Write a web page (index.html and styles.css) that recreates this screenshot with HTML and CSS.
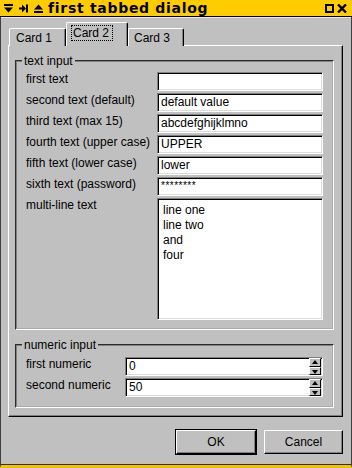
FILE: index.html
```html
<!DOCTYPE html>
<html>
<head>
<meta charset="utf-8">
<link rel="stylesheet" href="styles.css">
</head>
<body>
<div class="window">
  <div class="titlebar">
    <div class="tb-left">
      <svg class="tbi" width="9" height="9" viewBox="0 0 9 9"><rect x="0" y="0" width="9" height="2" fill="#000"/><polygon points="0,3.5 9,3.5 4.5,8.5" fill="#000"/></svg>
      <svg class="tbi" width="9" height="9" viewBox="0 0 9 9"><rect x="0" y="3.5" width="4" height="2" fill="#000"/><polygon points="3,0.5 7,4.5 3,8.5" fill="#000"/><rect x="7" y="0.5" width="2" height="8" fill="#000"/></svg>
      <svg class="tbi last" width="9" height="9" viewBox="0 0 9 9"><polygon points="0,5.5 9,5.5 4.5,0.5" fill="#000"/><rect x="0" y="7" width="9" height="2" fill="#000"/></svg>
      <span class="title">first tabbed dialog</span>
    </div>
    <div class="tb-right">
      <svg width="9" height="9" viewBox="0 0 9 9"><rect x="1" y="1" width="7" height="7" fill="none" stroke="#000" stroke-width="2"/></svg>
      <svg width="10" height="9" viewBox="0 0 10 9"><path d="M1 0.5 L9 8.5 M9 0.5 L1 8.5" stroke="#000" stroke-width="2.4"/></svg>
    </div>
  </div>
  <div class="body">
    <div class="tabs">
      <div class="tab t1">Card 1</div>
      <div class="tab t2 active"><span class="focus">Card 2</span></div>
      <div class="tab t3">Card 3</div>
    </div>
    <div class="panel">
      <fieldset class="group">
        <legend>text input</legend>
        <div class="grid text-grid">
          <div class="label">first text</div><div class="field"></div>
          <div class="label">second text (default)</div><div class="field">default value</div>
          <div class="label">third text (max 15)</div><div class="field">abcdefghijklmno</div>
          <div class="label">fourth text (upper case)</div><div class="field">UPPER</div>
          <div class="label">fifth text (lower case)</div><div class="field">lower</div>
          <div class="label">sixth text (password)</div><div class="field pw">********</div>
          <div class="label">multi-line text</div>
          <div class="field multi">line one<br>line two<br>and<br>four</div>
        </div>
      </fieldset>
      <fieldset class="group numeric">
        <legend>numeric input</legend>
        <div class="grid num-grid">
          <div class="label">first numeric</div>
          <div class="field spin"><span>0</span><span class="spinner"><span class="sb up"></span><span class="sb down"></span></span></div>
          <div class="label">second numeric</div>
          <div class="field spin"><span>50</span><span class="spinner"><span class="sb up"></span><span class="sb down"></span></span></div>
        </div>
      </fieldset>
    </div>
    <div class="footer">
      <div class="btn default"><div class="btn-in">OK</div></div>
      <div class="btn cancel"><div class="btn-in">Cancel</div></div>
    </div>
  </div>
</div>
</body>
</html>
```
FILE: styles.css
```css
html, body {
  margin: 0;
  padding: 0;
}
body {
  width: 352px;
  height: 468px;
  overflow: hidden;
  background: #c0c0c0;
  font-family: "Liberation Sans", Arial, sans-serif;
  font-size: 12px;
  color: #000;
}
.window {
  width: 352px;
  height: 468px;
  box-sizing: border-box;
  display: flex;
  flex-direction: column;
  background: #c0c0c0;
  border-left: 1px solid #404040;
  border-right: 1px solid #404040;
  border-bottom: 3px solid #f2c200;
}
.titlebar {
  height: 16px;
  background: #ffcc00;
  border-bottom: 1px solid #000;
  display: flex;
  align-items: center;
  justify-content: space-between;
  flex: none;
  margin: 0 -1px;
  padding: 0 5px 0 4px;
}
.tb-left {
  display: flex;
  align-items: center;
}
.tbi {
  margin-right: 6px;
}
.tbi.last {
  margin-right: 5px;
}
.title {
  font-family: "DejaVu Sans", sans-serif;
  font-weight: bold;
  font-size: 14px;
  letter-spacing: 0.7px;
  line-height: 16px;
}
.tb-right {
  display: flex;
  align-items: center;
  gap: 3px;
}
.body {
  flex: 1;
  border-top: 1px solid #e8e8e8;
  padding: 5px 8px 0 7px;
  display: flex;
  flex-direction: column;
  border-bottom: 1px solid #303030;
}
.tabs {
  display: flex;
  height: 23px;
  align-items: flex-end;
  position: relative;
  z-index: 1;
  margin-bottom: -1px;
}
.tab {
  box-sizing: border-box;
  height: 18px;
  border-top: 1px solid #fff;
  border-left: 1px solid #fff;
  border-right: 1px solid #000;
  box-shadow: inset -1px 0 #808080;
  border-radius: 2px 2px 0 0;
  background: #c0c0c0;
  padding: 2px 0 0 6px;
  line-height: 14px;
}
.t1 { width: 57px; margin-left: 1px; }
.t2 { width: 62px; }
.t3 { width: 56px; padding-left: 5px; }
.tab.active {
  height: 24px;
  padding: 3px 0 0 5px;
}
.focus {
  display: inline-block;
  outline: 1px dotted #000;
  padding: 0 3px 0 1px;
  line-height: 14px;
}
.panel {
  box-sizing: border-box;
  width: 335px;
  border-top: 1px solid #fff;
  border-left: 1px solid #fff;
  border-right: 1px solid #000;
  border-bottom: 1px solid #000;
  box-shadow: inset -1px -1px #808080;
  padding: 8px 9px 8px 6px;
}
.group {
  margin: 0;
  border: 2px groove #c0c0c0;
  border-color: #808080 #fff #fff #808080;
  padding: 4px 9px 8px 9px;
}
.group legend {
  padding: 0 2px;
  margin-left: -4px;
  line-height: 14px;
  height: 14px;
}
.numeric {
  margin-top: 8px;
  padding-top: 5px;
  padding-bottom: 9px;
}
.grid {
  display: grid;
  row-gap: 2px;
}
.text-grid {
  grid-template-columns: 131px 166px;
}
.num-grid {
  grid-template-columns: 99px 198px;
}
.label {
  line-height: 14px;
  white-space: nowrap;
}
.field {
  box-sizing: border-box;
  height: 19px;
  background: #fff;
  border: 1px solid;
  border-color: #808080 #fff #fff #808080;
  box-shadow: inset 1px 1px #000, inset -1px -1px #dcdcdc;
  padding: 0 3px;
  line-height: 17px;
  white-space: nowrap;
  overflow: hidden;
}
.pw {
  font-size: 10px;
  letter-spacing: 0.5px;
  line-height: 15px;
}
.multi {
  height: 122px;
  line-height: 15px;
  padding: 4px 5px;
}
.spin {
  display: flex;
  justify-content: space-between;
  align-items: center;
  padding-right: 1px;
}
.spinner {
  display: flex;
  flex-direction: column;
  width: 12px;
  height: 17px;
}
.sb {
  flex: 1;
  box-sizing: border-box;
  background: #c0c0c0;
  border: 1px solid;
  border-color: #fff #000 #000 #fff;
  position: relative;
}
.sb::after {
  content: "";
  position: absolute;
  left: 2px;
  width: 0;
  height: 0;
  border-left: 3px solid transparent;
  border-right: 3px solid transparent;
}
.up::after {
  top: 1px;
  border-bottom: 4px solid #000;
}
.down::after {
  top: 2px;
  border-top: 4px solid #000;
}
.footer {
  flex: 1;
  display: flex;
  justify-content: flex-end;
  align-items: flex-start;
  padding-top: 12px;
  gap: 7px;
}
.btn {
  box-sizing: border-box;
}
.btn-in {
  box-sizing: border-box;
  height: 100%;
  border: 1px solid;
  border-color: #fff #000 #000 #fff;
  box-shadow: inset -1px -1px #808080;
  display: flex;
  align-items: center;
  justify-content: center;
  background: #c0c0c0;
}
.default {
  width: 82px;
  height: 26px;
  border: 1px solid #000;
}
.cancel {
  width: 79px;
  height: 24px;
  margin-top: 1px;
}
```
